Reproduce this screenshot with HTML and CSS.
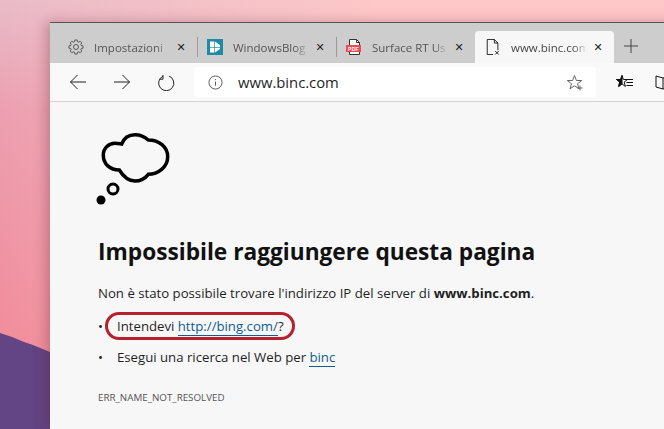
FILE: index.html
```html
<!DOCTYPE html>
<html lang="it">
  <head>
    <meta charset="UTF-8" />
    <title>www.binc.com</title>
    <link rel="stylesheet" href="styles.css">
  </head>
  <body>
    <svg class="hill" viewBox="0 0 50 96" preserveAspectRatio="none">
      <path d="M0 0 L12 4 L24 9 L33 12 L50 19 V96 H0 Z" fill="#634484" />
    </svg>
    <div class="window">
      <div class="tabs">
        <div class="tab">
          <svg class="favicon" viewBox="0 0 18 18" fill="none" stroke="#555" stroke-width="1.100">
            <g transform="translate(9 9)">
              <circle r="2.800" />
              <polygon points="5.96,-1.71 7.9,-1.25 7.9,1.25 5.96,1.71 5.42,2.98 6.47,4.7 4.7,6.47 2.98,5.42 1.71,5.96 1.25,7.9 -1.25,7.9 -1.71,5.96 -2.98,5.42 -4.7,6.47 -6.47,4.7 -5.42,2.98 -5.96,1.71 -7.9,1.25 -7.9,-1.25 -5.96,-1.71 -5.42,-2.98 -6.47,-4.7 -4.7,-6.47 -2.98,-5.42 -1.71,-5.96 -1.25,-7.9 1.25,-7.9 1.71,-5.96 2.98,-5.42 4.7,-6.47 6.47,-4.7 5.42,-2.98" />
            </g>
          </svg>
          <span class="tab-title">Impostazioni</span>
          <span class="close">&#x2715;</span>
        </div>
        <div class="tab">
          <svg class="favicon" viewBox="0 0 16 16">
            <rect width="16" height="16" fill="#1b8ba6" />
            <path d="M3 2.500h5l5 3.500v4l-5 3.500H3z" fill="#fff" />
            <path d="M7.500 2v12M3 8.500h10" stroke="#1b8ba6" stroke-width=".7" />
          </svg>
          <span class="tab-title">WindowsBlog</span>
          <span class="close">&#x2715;</span>
        </div>
        <div class="tab">
          <svg class="favicon" viewBox="0 0 16 16">
            <path d="M3.500.5h7l3 3v12h-10z" fill="#fff" stroke="#333" />
            <path d="M10.500.5v3h3" fill="none" stroke="#333" />
            <rect y="6" width="15" height="7" fill="#ee4a52" />
            <text class="pdf" x="7.500" y="11.500">PDF</text>
          </svg>
          <span class="tab-title">Surface RT Us</span>
          <span class="close">&#x2715;</span>
        </div>
        <div class="tab active">
          <svg class="favicon" viewBox="0 0 16 18" fill="none" stroke="#111" stroke-width="1">
            <path d="M8 17.500H1.500V.5h8l4 4v8" />
            <path d="M9.500.5v4h4" />
            <path d="M10.500 13.500l4 4m0-4l-4 4" />
          </svg>
          <span class="tab-title">www.binc.com</span>
          <span class="close">&#x2715;</span>
        </div>
        <svg class="new-tab" viewBox="0 0 14 14" stroke="#444" stroke-width="1">
          <path d="M7 0v14M0 7h14" />
        </svg>
      </div>
      <div class="toolbar">
        <svg class="nav" viewBox="0 0 18 18" fill="none" stroke="#222" stroke-width="1">
          <path d="M17 9H1.500M8.500 2L1.500 9l7 7" />
        </svg>
        <svg class="nav" viewBox="0 0 18 18" fill="none" stroke="#222" stroke-width="1">
          <path d="M1 9h15.500M9.500 2l7 7-7 7" />
        </svg>
        <svg class="nav" viewBox="0 0 18 18" fill="none" stroke="#222" stroke-width="1">
          <path d="M6 1.500v4.200H2.500M6 2.700a7.600 7.600 0 1 0 6-.2" transform="translate(0 .5)" />
        </svg>
        <div class="address">
          <svg class="info" viewBox="0 0 16 16" fill="none" stroke="#555">
            <circle cx="8" cy="8" r="7" />
            <path d="M8 7v4.500M8 4.300v1.200" />
          </svg>
          <span class="url">www.binc.com</span>
          <svg class="add-fav" viewBox="0 0 17 17" fill="none" stroke="#666">
            <path d="M7.500 1.500l1.900 5h5.300l-4.200 3.300 1.500 5-4.500-3-4.500 3 1.500-5L.3 6.500h5.300z" />
            <path d="M13 11.500v5M10.500 14h5" />
          </svg>
        </div>
        <svg class="favorites" viewBox="0 0 17 16" fill="none" stroke="#111">
          <path d="M6 1.500l1.400 4H11.500L8.200 8l1.200 4.500-3.400-2.600-3.400 2.600L3.800 8 .5 5.500h4.100z" />
          <path d="M6 1.500v8.400l-3.400 2.600L3.800 8 .5 5.500h4.100z" fill="#111" />
          <path d="M10 5.500h7M10.500 8.500H17M10.500 11.500H17" />
        </svg>
        <svg class="reading" viewBox="0 0 17 16" fill="none" stroke="#111">
          <path d="M1 2l7 2 7-2v11l-7 2-7-2zM8 4v11" />
        </svg>
      </div>
      <div class="page">
        <svg class="cloud" viewBox="0 0 76 74" fill="none" stroke="#000">
          <path d="M25.700 13C28 7 33 3.700 39 3.700c6 0 10 2.300 13.300 5.300C63 9 71.700 16 71.700 25.700c0 10.300-9.700 17.600-19.400 17.600C49 47.500 44 50 39 50c-7 0-12-5-15.700-11C14 39 7.300 33 7.300 24c0-7 5.700-11.700 11.700-11.700 3 0 5 .5 6.700.7z" stroke-width="3.500" />
          <circle cx="17" cy="58" r="5" stroke-width="3" />
          <circle cx="5" cy="69" r="4.500" fill="#000" stroke="none" />
        </svg>
        <h1>Impossibile raggiungere questa pagina</h1>
        <p class="lead">Non è stato possibile trovare l'indirizzo IP del server di <b>www.binc.com</b>.</p>
        <ul>
          <li class="circled">Intendevi <a href="#">http://bing.com/</a>?</li>
          <li>Esegui una ricerca nel Web per <a href="#">binc</a></li>
        </ul>
        <div class="code">ERR_NAME_NOT_RESOLVED</div>
      </div>
    </div>
  </body>
</html>
```

FILE: styles.css
```css
html, body {
  height: 100%;
}
body {
  margin: 0;
  padding: 23px 0 0 50px;
  box-sizing: border-box;
  overflow: hidden;
  background:
    linear-gradient(to right, transparent, #ffc8c8 400px),
    linear-gradient(to bottom, #e9bcc8 0, #ec9fb0 110px, #f28c9b 340px);
  font-family: "Open Sans", "Noto Sans", sans-serif;
  color: #1f1f1f;
}
.hill {
  position: absolute;
  left: 0;
  top: 333px;
  width: 50px;
  height: 96px;
}
.window {
  position: relative;
  width: 640px;
  height: 406px;
  background-color: #f7f7f7;
  border-top: 1px solid #555;
  margin-top: -1px;
  box-shadow: -4px 0 12px rgba(90, 30, 50, 0.3);
}
.tabs {
  display: flex;
  align-items: flex-end;
  height: 40px;
  padding-left: 8px;
  background-color: #cdcdcd;
}
.tab {
  display: flex;
  align-items: center;
  width: 139px;
  height: 32px;
  box-sizing: border-box;
  padding: 0 9px 0 10px;
  font-size: 11.500px;
  color: #555;
  position: relative;
}
.tab + .tab:not(.active)::before {
  content: "";
  position: absolute;
  left: 0;
  top: 6px;
  height: 20px;
  width: 1px;
  background-color: #999;
}
.tab.active {
  background-color: #f7f7f7;
  border-radius: 4px 4px 0 0;
  color: #444;
}
.favicon {
  flex: none;
  width: 16px;
  height: 16px;
  margin-right: 10px;
}
.pdf {
  font-family: "Liberation Sans", sans-serif;
  font-size: 5px;
  font-weight: 700;
  letter-spacing: 0.3px;
  fill: #fff;
  text-anchor: middle;
}
.tab-title {
  flex: 1;
  min-width: 0;
  white-space: nowrap;
  overflow: hidden;
  -webkit-mask-image: linear-gradient(to right, #000 82%, transparent);
  mask-image: linear-gradient(to right, #000 82%, transparent);
}
.close {
  flex: none;
  width: 14px;
  margin-left: 4px;
  text-align: center;
  font-size: 11px;
  color: #222;
  font-family: "DejaVu Sans", sans-serif;
}
.new-tab {
  width: 14px;
  height: 14px;
  margin: 0 0 10px 10px;
}
.toolbar {
  display: flex;
  align-items: center;
  height: 38px;
  border-bottom: 1px solid #d4d4d4;
  background-color: #f9f9f9;
  padding-left: 19px;
}
.nav {
  flex: none;
  width: 18px;
  height: 18px;
  margin-right: 26px;
}
.address {
  display: flex;
  align-items: center;
  flex: none;
  width: 402px;
  height: 30px;
  box-sizing: border-box;
  margin-left: -7px;
  padding: 0 12px 0 14px;
  background-color: #fff;
  border-radius: 3px;
  font-size: 14.800px;
}
.info {
  width: 15px;
  height: 15px;
  margin-right: 15px;
}
.url {
  flex: 1;
}
.add-fav {
  width: 17px;
  height: 17px;
}
.favorites {
  flex: none;
  width: 17px;
  height: 16px;
  margin-left: 20px;
}
.reading {
  flex: none;
  width: 17px;
  height: 16px;
  margin-left: 22px;
}
.page {
  padding: 29px 0 0 46px;
}
.cloud {
  display: block;
  width: 76px;
  height: 74px;
}
h1 {
  margin: 32px 0 0 2px;
  font-size: 22.700px;
  line-height: 30px;
  font-weight: 700;
  color: #111;
}
.lead {
  margin: 16px 0 0 2px;
  font-size: 13.200px;
  line-height: 20px;
}
ul {
  list-style: none;
  margin: 13px 0 0 2px;
  padding: 0;
  font-size: 13.200px;
}
li {
  position: relative;
  padding-left: 19px;
  line-height: 20px;
  margin-bottom: 11px;
}
li::before {
  content: "•";
  position: absolute;
  left: 0;
}
li.circled::after {
  content: "";
  position: absolute;
  left: 7px;
  top: -4px;
  width: 184px;
  height: 22px;
  border: 3px solid #b8202f;
  border-radius: 14px;
}
a {
  color: #0f5c93;
  text-decoration: none;
  border-bottom: 1px solid #0f5c93;
}
.code {
  margin: 24px 0 0 2px;
  font-size: 9.800px;
  color: #555;
}
```
